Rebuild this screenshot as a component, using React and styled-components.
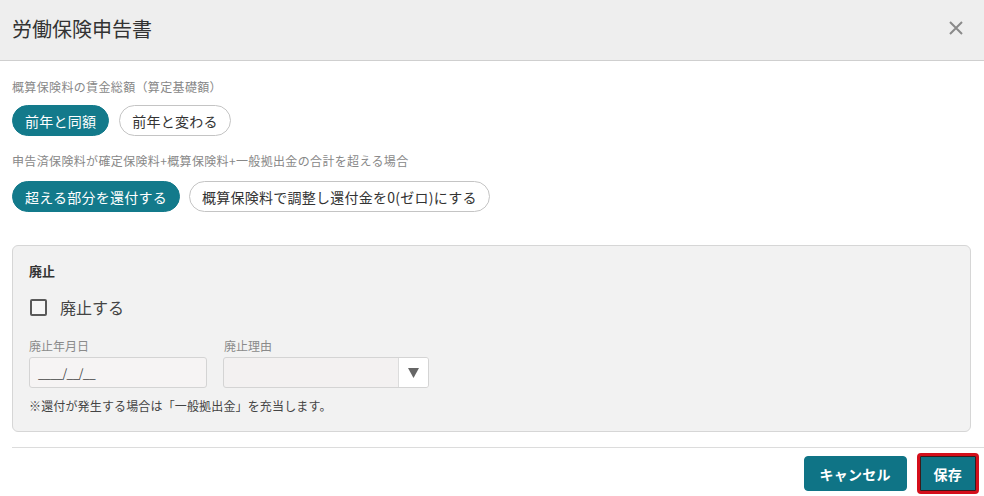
import React from "react";
import styled, { createGlobalStyle } from "styled-components";

const Global = createGlobalStyle`
  html, body { margin: 0; padding: 0; background: #fff; }
  body { font-family: "Noto Sans CJK JP", "Noto Sans", sans-serif; color: #333; }
  * { box-sizing: border-box; }
`;

const Dialog = styled.div`
  width: 984px;
  height: 496px;
  display: flex;
  flex-direction: column;
  background: #fff;
`;

const Header = styled.header`
  height: 61px;
  flex: none;
  display: flex;
  align-items: center;
  justify-content: space-between;
  padding: 0 20px 0 12px;
  background: #eeeeee;
  border-bottom: 1px solid #cfcfcf;
`;

const Title = styled.h1`
  margin: 0 0 3px;
  font-size: 20px;
  font-weight: 400;
  color: #333;
  line-height: 28px;
`;

const CloseBtn = styled.button`
  border: 0;
  background: none;
  padding: 0;
  width: 16px;
  height: 16px;
  display: flex;
  margin-bottom: 4px;
  cursor: pointer;
`;

const Body = styled.div`
  flex: 1;
  padding: 18px 13px 0 12px;
  display: flex;
  flex-direction: column;
`;

const SectionLabel = styled.div`
  font-size: 12px;
  line-height: 16px;
  color: #888;
  letter-spacing: 0.35px;
  margin-bottom: ${(p) => p.$mb || 10}px;
`;

const PillRow = styled.div`
  display: flex;
  gap: ${(p) => p.$gap || 9}px;
  margin-bottom: ${(p) => p.$mb || 0}px;
`;

const Pill = styled.button`
  height: 31px;
  padding: 0 12px;
  border-radius: 16px;
  font-family: inherit;
  font-size: 14px;
  line-height: 1;
  letter-spacing: 0.25px;
  border: 1px solid ${(p) => (p.$active ? "#137a8b" : "#c4c4c4")};
  background: ${(p) => (p.$active ? "#137a8b" : "#fff")};
  color: ${(p) => (p.$active ? "#fff" : "#333")};
  cursor: pointer;
`;

const Panel = styled.section`
  border: 1px solid #d6d6d6;
  border-radius: 6px;
  background: #f2f2f2;
  padding: 16px 16px 17px 16px;
  display: flex;
  flex-direction: column;
`;

const PanelTitle = styled.div`
  font-size: 13px;
  font-weight: 700;
  line-height: 18px;
  color: #333;
  margin-bottom: 15px;
`;

const CheckRow = styled.label`
  display: flex;
  align-items: center;
  gap: 13px;
  height: 24px;
  margin-left: 1px;
  margin-bottom: 19px;
  font-size: 16px;
  color: #444;
`;

const Box = styled.span`
  width: 17px;
  height: 17px;
  border: 2px solid #5a5a5a;
  border-radius: 2px;
  background: #f7f7f7;
`;

const Fields = styled.div`
  display: flex;
  gap: 17px;
  margin-bottom: 10px;
`;

const Field = styled.div`
  display: flex;
  flex-direction: column;
  gap: 3px;
`;

const FieldLabel = styled.div`
  font-size: 12px;
  line-height: 16px;
  color: #8a8a8a;
`;

const DateInput = styled.div`
  width: 178px;
  height: 31px;
  border: 1px solid #d4d4d4;
  border-radius: 3px;
  background: #f6f4f4;
  display: flex;
  align-items: center;
  padding: 0 8px;
  font-size: 12px;
  color: #444;
  letter-spacing: -0.6px;
`;

const Select = styled.div`
  width: 206px;
  height: 31px;
  margin-left: -1px;
  border: 1px solid #d4d4d4;
  border-radius: 3px;
  background: #f3f1f1;
  display: flex;
  justify-content: flex-end;
  overflow: hidden;
`;

const SelectArrow = styled.span`
  width: 30px;
  height: 100%;
  background: #fff;
  border-left: 1px solid #dcdcdc;
  display: flex;
  align-items: center;
  justify-content: center;
`;

const Note = styled.div`
  font-size: 12px;
  line-height: 16px;
  color: #444;
  letter-spacing: 0.15px;
`;

const Footer = styled.footer`
  margin: 15px -13px 0 0;
  border-top: 1px solid #dcdcdc;
  padding: 5px 5px 0 0;
  display: flex;
  justify-content: flex-end;
  align-items: center;
  gap: 10px;
`;

const ActionBtn = styled.button`
  height: ${(p) => (p.$focused ? 41 : 35)}px;
  padding: 0 ${(p) => (p.$focused ? 14 : 15)}px;
  border-radius: 4px;
  border: ${(p) => (p.$focused ? "3px solid #d40f1b" : "1px solid #0f7486")};
  box-shadow: ${(p) => (p.$focused ? "inset 0 0 0 1px #3a1a1a" : "none")};
  background: #0f7486;
  color: #fff;
  font-family: inherit;
  font-size: 14px;
  font-weight: 700;
  letter-spacing: 0.2px;
  cursor: pointer;
`;

export default function App() {
  return (
    <>
      <Global />
      <Dialog>
        <Header>
          <Title>労働保険申告書</Title>
          <CloseBtn aria-label="close">
            <svg width="16" height="16" viewBox="0 0 16 16">
              <path d="M2 2 L14 14 M14 2 L2 14" stroke="#8a8a8a" strokeWidth="2" />
            </svg>
          </CloseBtn>
        </Header>
        <Body>
          <SectionLabel>概算保険料の賃金総額（算定基礎額）</SectionLabel>
          <PillRow $mb={17} $gap={10}>
            <Pill $active>前年と同額</Pill>
            <Pill>前年と変わる</Pill>
          </PillRow>
          <SectionLabel $mb={12}>申告済保険料が確定保険料+概算保険料+一般拠出金の合計を超える場合</SectionLabel>
          <PillRow $mb={33} $gap={9}>
            <Pill $active>超える部分を還付する</Pill>
            <Pill>概算保険料で調整し還付金を0(ゼロ)にする</Pill>
          </PillRow>
          <Panel>
            <PanelTitle>廃止</PanelTitle>
            <CheckRow>
              <Box />
              廃止する
            </CheckRow>
            <Fields>
              <Field>
                <FieldLabel>廃止年月日</FieldLabel>
                <DateInput>____/__/__</DateInput>
              </Field>
              <Field>
                <FieldLabel>廃止理由</FieldLabel>
                <Select>
                  <SelectArrow>
                    <svg width="11" height="10" viewBox="0 0 11 10">
                      <path d="M0 0 H11 L5.5 10 Z" fill="#666" />
                    </svg>
                  </SelectArrow>
                </Select>
              </Field>
            </Fields>
            <Note>※還付が発生する場合は「一般拠出金」を充当します。</Note>
          </Panel>
          <Footer>
            <ActionBtn>キャンセル</ActionBtn>
            <ActionBtn $focused>保存</ActionBtn>
          </Footer>
        </Body>
      </Dialog>
    </>
  );
}
